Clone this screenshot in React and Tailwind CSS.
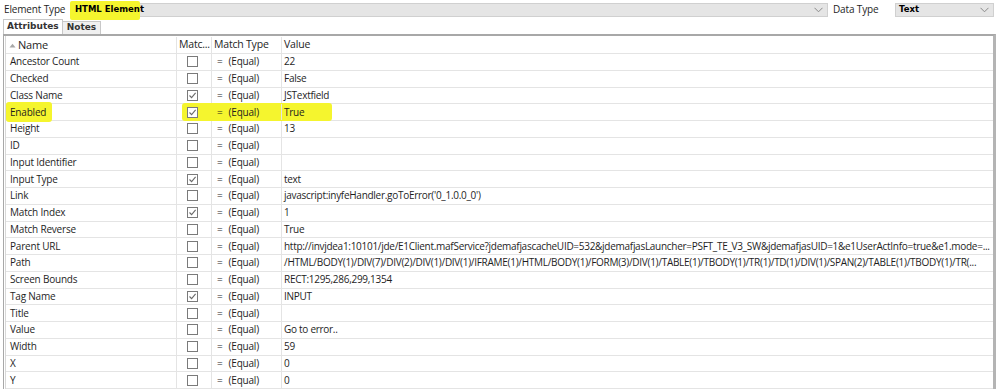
import React from 'react';

const rows = [
  { name: 'Ancestor Count', checked: false, value: '22' },
  { name: 'Checked', checked: false, value: 'False' },
  { name: 'Class Name', checked: true, value: 'JSTextfield' },
  { name: 'Enabled', checked: true, value: 'True', highlight: true },
  { name: 'Height', checked: false, value: '13' },
  { name: 'ID', checked: false, value: '' },
  { name: 'Input Identifier', checked: false, value: '' },
  { name: 'Input Type', checked: true, value: 'text' },
  { name: 'Link', checked: false, value: "javascript:inyfeHandler.goToError('0_1.0.0_0')" },
  { name: 'Match Index', checked: true, value: '1' },
  { name: 'Match Reverse', checked: false, value: 'True' },
  {
    name: 'Parent URL',
    checked: false,
    value:
      'http://invjdea1:10101/jde/E1Client.mafService?jdemafjascacheUID=532&jdemafjasLauncher=PSFT_TE_V3_SW&jdemafjasUID=1&e1UserActInfo=true&e1.mode=...'
  },
  {
    name: 'Path',
    checked: false,
    value:
      '/HTML/BODY(1)/DIV(7)/DIV(2)/DIV(1)/DIV(1)/IFRAME(1)/HTML/BODY(1)/FORM(3)/DIV(1)/TABLE(1)/TBODY(1)/TR(1)/TD(1)/DIV(1)/SPAN(2)/TABLE(1)/TBODY(1)/TR(...'
  },
  { name: 'Screen Bounds', checked: false, value: 'RECT:1295,286,299,1354' },
  { name: 'Tag Name', checked: true, value: 'INPUT' },
  { name: 'Title', checked: false, value: '' },
  { name: 'Value', checked: false, value: 'Go to error..' },
  { name: 'Width', checked: false, value: '59' },
  { name: 'X', checked: false, value: '0' },
  { name: 'Y', checked: false, value: '0' }
];

function Checkbox({ checked }) {
  return (
    <div className="w-[11px] h-[11px] border border-[#7a7a7a] bg-white flex items-center justify-center">
      {checked && (
        <svg width="9" height="9" viewBox="0 0 9 9">
          <path d="M1.5 4.5 L3.6 6.6 L7.6 1.8" fill="none" stroke="#6b6b6b" strokeWidth="1.1" />
        </svg>
      )}
    </div>
  );
}

function Chevron() {
  return (
    <svg width="9" height="6" viewBox="0 0 9 6">
      <path d="M0.5 0.8 L4.5 4.8 L8.5 0.8" fill="none" stroke="#8a8a8a" strokeWidth="1" />
    </svg>
  );
}

export default function App() {
  return (
    <div
      className="w-[998px] h-[389px] bg-white overflow-hidden text-[#1e1e1e]"
      style={{ fontFamily: '"Open Sans", "Noto Sans", sans-serif' }}
    >
      {/* Top bar */}
      <div className="h-[19px] flex items-center text-[10px] tracking-[-0.15px]">
        <span className="ml-[4px] w-[66px] whitespace-nowrap">Element Type</span>
        <div className="relative w-[758px] h-[14px] bg-[#e5e5e5] border border-[#d0d0d0] flex items-center justify-between pl-[4px] pr-[4px]">
          <span className="absolute -left-[1px] -top-[3px] w-[70px] h-[19px] bg-[#f5f52e] rounded-[2px]" />
          <span
            className="relative text-[8.5px] font-bold text-black tracking-normal"
            style={{ fontFamily: 'Tahoma, "DejaVu Sans", sans-serif' }}
          >
            HTML Element
          </span>
          <Chevron />
        </div>
        <span className="ml-[5px] w-[62px] whitespace-nowrap">Data Type</span>
        <div className="w-[99px] h-[14px] bg-[#e5e5e5] border border-[#d0d0d0] flex items-center justify-between pl-[3px] pr-[4px]">
          <span
            className="text-[8.5px] font-bold text-black tracking-normal"
            style={{ fontFamily: 'Tahoma, "DejaVu Sans", sans-serif' }}
          >
            Text
          </span>
          <Chevron />
        </div>
      </div>

      {/* Tabs */}
      <div
        className="flex items-end h-[15px] pl-[3px] text-[9px] font-bold"
        style={{ fontFamily: 'Tahoma, "DejaVu Sans", sans-serif' }}
      >
        <div className="h-[15px] px-[3px] bg-white border border-b-0 border-[#c8c8c8] flex items-center text-[#333]">
          Attributes
        </div>
        <div className="h-[13px] px-[4px] bg-[#f0f0f0] border border-b-0 border-l-0 border-[#c8c8c8] flex items-center text-[#333]">
          Notes
        </div>
      </div>

      {/* Table */}
      <div className="ml-[3px] w-[993px] h-[360px] border-t-2 border-l border-r-[3px] border-[#a8a8a8] border-r-[#b4b4b4] overflow-hidden text-[10px] tracking-[-0.2px]">
        <div className="ml-[1px] border-l border-[#d8d8d8] h-full pt-[1px]">
          <div className="flex h-[17px] items-center border-b border-[#e4e4e4]">
            <div className="w-[171px] pl-[3px] flex items-center gap-[2px] border-r border-[#e4e4e4] h-full">
              <svg width="7" height="5" viewBox="0 0 7 5">
                <path d="M0.5 4.5 L3.5 0.8 L6.5 4.5 Z" fill="#a8a8a8" />
              </svg>
              <span className="text-[11px]">Name</span>
            </div>
            <div className="w-[35px] pl-[2px] border-r border-[#e4e4e4] h-full flex items-center whitespace-nowrap overflow-hidden text-[10.5px]">
              Matc...
            </div>
            <div className="w-[70px] pl-[2px] border-r border-[#e4e4e4] h-full flex items-center whitespace-nowrap text-[10.5px]">
              Match Type
            </div>
            <div className="flex-1 pl-[2px] h-full flex items-center text-[10.5px]">Value</div>
          </div>
          {rows.map((r) => (
            <div key={r.name} className="flex h-[16.75px] items-center border-b border-[#e4e4e4]">
              <div className="relative w-[171px] pl-[4px] border-r border-[#e4e4e4] h-full flex items-center">
                {r.highlight && (
                  <span className="absolute left-0 -top-[2px] w-[46px] h-[20px] bg-[#f5f52e] rounded-[3px]" />
                )}
                <span className="relative">{r.name}</span>
              </div>
              <div className="relative w-[35px] border-r border-[#e4e4e4] h-full flex items-center justify-center">
                {r.highlight && (
                  <span className="absolute left-[5px] -top-[1px] w-[150px] h-[18px] bg-[#f5f52e] rounded-[3px] z-0" />
                )}
                <div className="relative mr-[3px]">
                  <Checkbox checked={r.checked} />
                </div>
              </div>
              <div className="relative w-[70px] pl-[5px] border-r border-[#e4e4e4] h-full flex items-center whitespace-nowrap gap-[6px]">
                <span>=</span>
                <span>(Equal)</span>
              </div>
              <div className="relative flex-1 pl-[2px] h-full flex items-center whitespace-nowrap overflow-hidden tracking-[-0.28px]">
                {r.value}
              </div>
            </div>
          ))}
        </div>
      </div>
    </div>
  );
}
